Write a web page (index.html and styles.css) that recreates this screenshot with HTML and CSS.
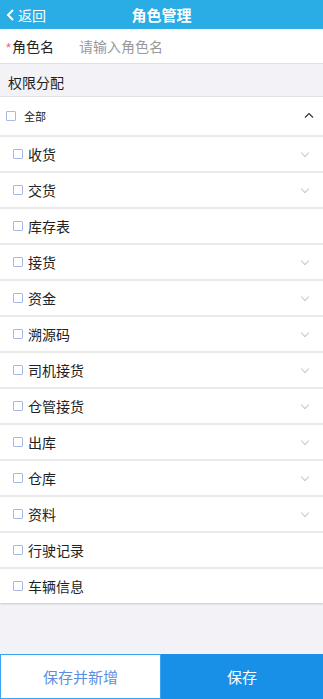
FILE: index.html
```html
<!DOCTYPE html>
<html lang="zh">
<head>
	<meta charset="UTF-8">
	<title>角色管理</title>
	<link rel="stylesheet" href="styles.css">
</head>
<body>
	<div class="page">
		<div class="header">
			<div class="back">
				<svg width="9" height="12" viewBox="0 0 9 12"><path d="M7 1 L2 6 L7 11" fill="none" stroke="#fff" stroke-width="2"/></svg>
				<span>返回</span>
			</div>
			<div class="title">角色管理</div>
		</div>

		<div class="field">
			<span class="star">*</span><span class="field-label">角色名</span>
			<span class="placeholder">请输入角色名</span>
		</div>

		<div class="section">权限分配</div>

		<div class="all-row">
			<span class="box"></span>
			<span class="all-label">全部</span>
			<svg class="caret-up" width="10" height="6" viewBox="0 0 10 6"><path d="M1 5.5 L5 1.5 L9 5.5" fill="none" stroke="#333" stroke-width="1.2"/></svg>
		</div>

		<div class="list">
			<div class="row"><span class="box"></span><span class="label">收货</span><span class="chev"></span></div>
			<div class="row"><span class="box"></span><span class="label">交货</span><span class="chev"></span></div>
			<div class="row"><span class="box"></span><span class="label">库存表</span></div>
			<div class="row"><span class="box"></span><span class="label">接货</span><span class="chev"></span></div>
			<div class="row"><span class="box"></span><span class="label">资金</span><span class="chev"></span></div>
			<div class="row"><span class="box"></span><span class="label">溯源码</span><span class="chev"></span></div>
			<div class="row"><span class="box"></span><span class="label">司机接货</span><span class="chev"></span></div>
			<div class="row"><span class="box"></span><span class="label">仓管接货</span><span class="chev"></span></div>
			<div class="row"><span class="box"></span><span class="label">出库</span><span class="chev"></span></div>
			<div class="row"><span class="box"></span><span class="label">仓库</span><span class="chev"></span></div>
			<div class="row"><span class="box"></span><span class="label">资料</span><span class="chev"></span></div>
			<div class="row"><span class="box"></span><span class="label">行驶记录</span></div>
			<div class="row"><span class="box"></span><span class="label">车辆信息</span></div>
		</div>

		<div class="footer">
			<div class="btn btn-plain">保存并新增</div>
			<div class="btn btn-main">保存</div>
		</div>
	</div>
</body>
</html>
```

FILE: styles.css
```css
body {
	margin: 0;
	font-family: "Noto Sans CJK SC", "Noto Sans", sans-serif;
	color: #222;
	background: #f3f3f7;
}
.page {
	height: 699px;
	display: flex;
	flex-direction: column;
}

/* top bar */
.header {
	height: 29px;
	background: #29ade4;
	color: #fff;
	display: flex;
	align-items: center;
	position: relative;
}
.back {
	display: flex;
	align-items: center;
	gap: 3px;
	padding-left: 6px;
	font-size: 14px;
}
.title {
	position: absolute;
	left: 0;
	right: 0;
	text-align: center;
	font-size: 15px;
	font-weight: bold;
	pointer-events: none;
}

.field {
	height: 34px;
	background: #fff;
	border-bottom: 1px solid #e0e0e0;
	display: flex;
	align-items: center;
	padding-left: 6px;
	font-size: 14px;
}
.star {
	color: #f7568a;
	font-family: "Liberation Sans", sans-serif;
	font-size: 13px;
	margin-right: 1px;
	position: relative;
	top: 1px;
}
.field-label {
	width: 67px;
}
.placeholder {
	color: #999;
}

.section {
	height: 32px;
	line-height: 36px;
	padding-left: 8px;
	font-size: 14px;
	border-bottom: 1px solid #e2e2e2;
}

.all-row {
	height: 38px;
	background: #fff;
	display: flex;
	align-items: center;
	padding: 0 9px 0 6px;
	font-size: 11px;
}
.all-row .box {
	margin-right: 8px;
}
.all-label {
	flex: 1;
}
.caret-up {
	margin-top: -3px;
}

.list {
	border-top: 2px solid #eaeaea;
	box-shadow: 0 1px 2px rgba(0, 0, 0, 0.18);
	background: #eaeaea;
	display: flex;
	flex-direction: column;
	gap: 2px;
}
.row {
	height: 34px;
	background: #fff;
	display: flex;
	align-items: center;
	padding: 0 13px;
	font-size: 14px;
}
.row .box {
	margin-right: 5px;
}
.label {
	flex: 1;
}
.chev {
	width: 5px;
	height: 5px;
	border-right: 1px solid #c8c8c8;
	border-bottom: 1px solid #c8c8c8;
	transform: rotate(45deg);
	margin: -3px 2px 0 0;
}

.box {
	width: 8px;
	height: 8px;
	border: 1px solid #a7b7e8;
	border-radius: 1px;
	background: #fff;
}

.footer {
	margin-top: auto;
	height: 45px;
	display: flex;
}
.btn {
	display: flex;
	align-items: center;
	justify-content: center;
	font-size: 15px;
}
.btn-plain {
	width: 159px;
	background: #fff;
	border: 1px solid #3aa3f2;
	color: #5a8fe3;
}
.btn-main {
	flex: 1;
	background: #1890e8;
	color: #fff;
}
```
